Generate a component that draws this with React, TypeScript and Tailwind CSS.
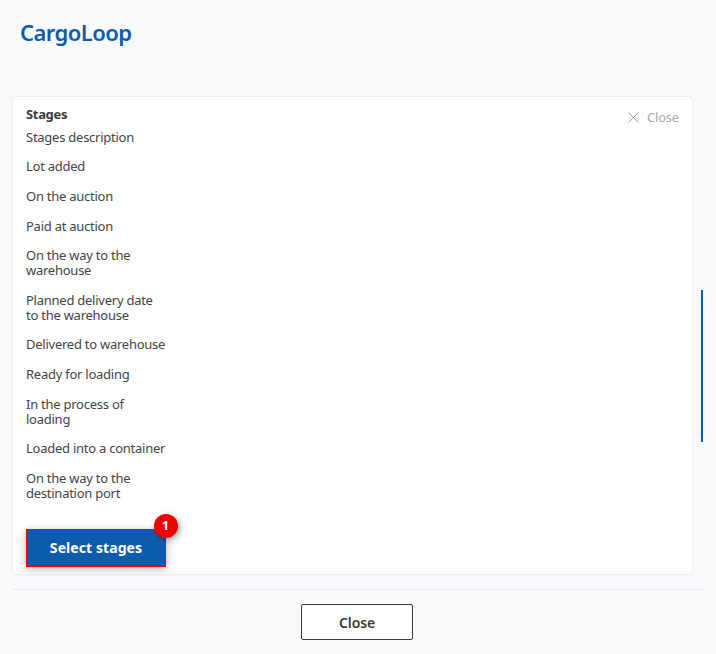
import React from "react";

const rows = [
  "Stages description",
  "Lot added",
  "On the auction",
  "Paid at auction",
  "On the way to the warehouse",
  "Planned delivery date to the warehouse",
  "Delivered to warehouse",
  "Ready for loading",
  "In the process of loading",
  "Loaded into a container",
  "On the way to the destination port",
];

export default function App() {
  return (
    <div className="relative h-[654px] w-[716px] overflow-hidden bg-[#f8f9fb] font-['Noto_Sans',sans-serif] text-[#3a3a3a]">
      <div className="h-[96px] pl-5 pt-[17px]">
        <h1 className="text-[22px] leading-[30px] font-semibold tracking-[-0.55px] text-[#0b5cad]">CargoLoop</h1>
      </div>
      <div className="mx-3 h-[479px] w-[681px] rounded-[5px] border border-[#eceef1] bg-white pl-[13px] pr-[13px] pt-[10px] shadow-[0_0_2px_rgba(0,0,0,0.04)]">
        <div className="flex items-start justify-between">
          <h2 className="text-[13px] leading-[15px] font-bold tracking-[-0.33px] text-[#3a3a3a]">Stages</h2>
          <button className="mt-[1px] flex items-center gap-[8px] text-[13px] leading-[18px] tracking-[-0.2px] text-[#a9a9a9]">
            <svg width="11" height="11" viewBox="0 0 11 11" fill="none" stroke="#a0a0a0" strokeWidth="1">
              <path d="M0.5 0.5 L10.5 10.5 M10.5 0.5 L0.5 10.5" />
            </svg>
            Close
          </button>
        </div>
        <ul className="mt-[3.7px] flex w-[141px] flex-col gap-[14.9px]">
          {rows.map((r) => (
            <li key={r} className="text-[13px] leading-[14.8px] tracking-[-0.25px] text-[#444444]">{r}</li>
          ))}
        </ul>
        <div className="relative mt-[28.3px] w-[140px]">
          <button className="h-[38px] w-[140px] border border-[#f00000] bg-[#0b5cad] text-[14px] font-bold tracking-[0.08px] text-white shadow-[0_2px_8px_rgba(0,0,0,0.3)]">
            Select stages
          </button>
          <span className="absolute -top-[15px] left-[127.5px] flex h-6 w-6 items-center justify-center rounded-full bg-[#f00000] text-[13px] font-bold text-white shadow-[2px_2px_6px_rgba(0,0,0,0.35)]">
            1
          </span>
        </div>
      </div>
      <div className="mx-3 mt-[14px] w-[692px] border-t border-[#e8eaee] pt-[14px]">
        <div className="flex justify-center pr-[2px]">
          <button className="h-[36px] w-[112px] rounded-[2px] border border-[#3a3a3a] bg-white text-[14px] font-semibold tracking-[-0.1px] text-[#3a3a3a]">
            Close
          </button>
        </div>
      </div>
      <div className="absolute left-[701px] top-[290px] h-[152px] w-[2px] bg-[#0b5cad]" />
    </div>
  );
}
